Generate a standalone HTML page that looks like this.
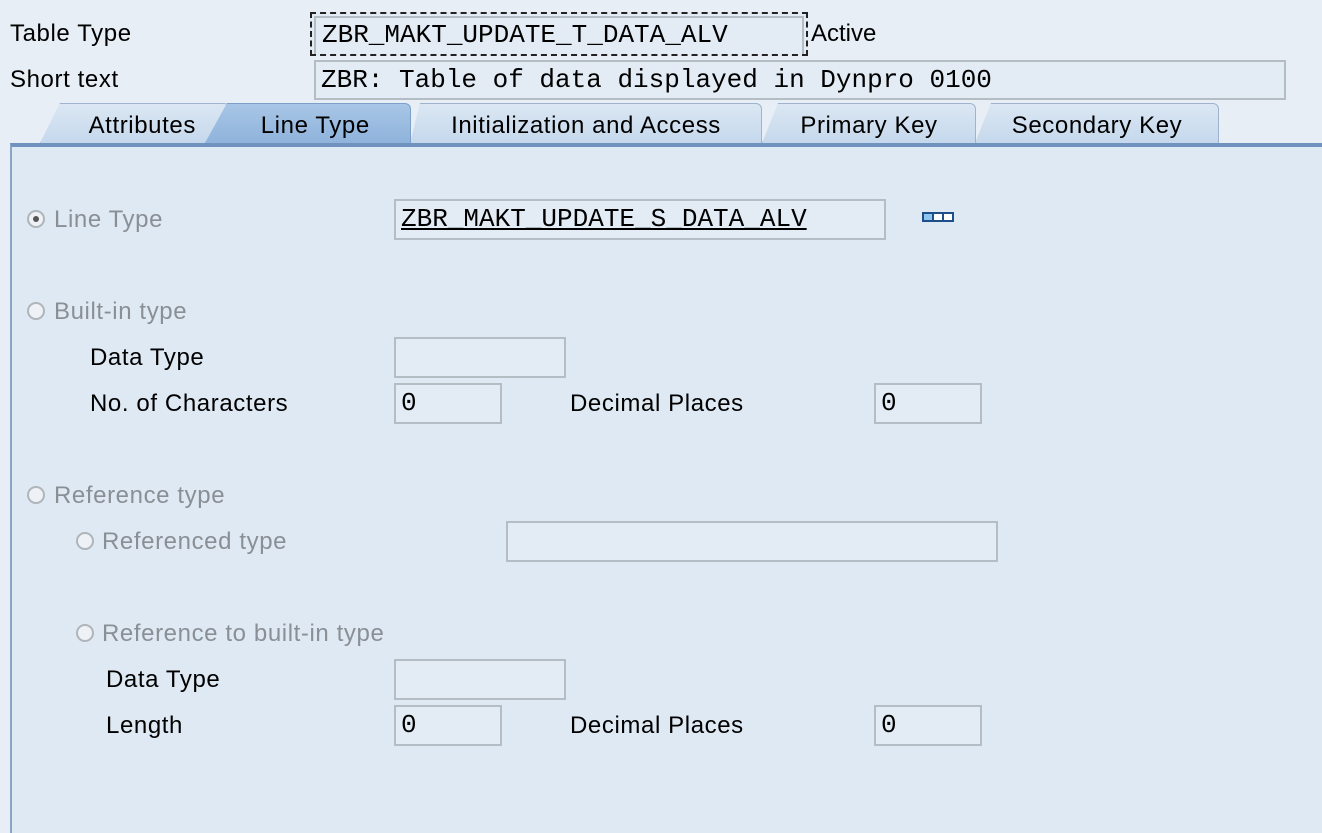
<!DOCTYPE html>
<html><head><meta charset="utf-8"><style>
body{margin:0;width:1322px;height:818px;background:#e7eef5;font-family:"Liberation Sans",sans-serif;font-size:24px;letter-spacing:0.6px;color:#000;position:relative;overflow:hidden}
.a{position:absolute;white-space:nowrap}
.lbl{position:absolute;white-space:nowrap;line-height:30px}
.g{color:#8a8f95}
.f{position:absolute;border:2px solid #b4bcc4;background:#e3ecf5;box-sizing:border-box;font-family:"Liberation Mono",monospace;font-size:26px;letter-spacing:0;line-height:36px;padding-left:5px;white-space:nowrap;overflow:hidden}
.tab{position:absolute;top:103px;height:40px;background:linear-gradient(#dbe7f3,#c5d8ec);border:1px solid #9fb4cc;border-bottom:none;border-radius:0 6px 0 0;box-sizing:border-box;text-align:center;line-height:44px}
.tab.s{background:linear-gradient(#a8c6e6,#8fb3dc);border-color:#7da0c8}
.r{position:absolute;width:18px;height:18px;border:2px solid #b0b5ba;border-radius:50%;box-sizing:border-box;background:#eef2f6}
</style></head><body>
<div class="lbl" style="left:10px;top:19px">Table Type</div>
<div class="lbl" style="left:10px;top:65px">Short text</div>
<div class="f" style="left:310px;top:12px;width:498px;height:44px;border:2px dashed #222;padding:2px"><div style="border:2px solid #b4bcc4;height:36px;line-height:34px;padding-left:6px;background:#e3ecf5">ZBR_MAKT_UPDATE_T_DATA_ALV</div></div>
<div class="lbl" style="left:811px;top:19px;letter-spacing:0">Active</div>
<div class="f" style="left:314px;top:60px;width:972px;height:40px">ZBR: Table of data displayed in Dynpro 0100</div>

<div style="position:absolute;left:10px;top:143px;width:1330px;height:690px;background:#dfe9f3;border-left:2px solid #8aa6c6;border-top:4px solid #6f93be;box-sizing:border-box"></div>
<div class="tab" style="left:40px;width:190px;clip-path:polygon(20px 0,100% 0,100% 100%,0 100%)">&nbsp;&nbsp;Attributes</div>
<div class="tab" style="left:410px;width:352px;clip-path:polygon(10px 0,100% 0,100% 100%,0 100%)">Initialization and Access</div>
<div class="tab" style="left:762px;width:214px;clip-path:polygon(16px 0,100% 0,100% 100%,0 100%)">Primary Key</div>
<div class="tab" style="left:975px;width:244px;clip-path:polygon(16px 0,100% 0,100% 100%,0 100%)">Secondary Key</div>
<div class="tab s" style="left:205px;width:206px;clip-path:polygon(22px 0,100% 0,100% 100%,0 100%)">&nbsp;&nbsp;Line Type</div>

<div class="r" style="left:27px;top:210px"><div style="width:6px;height:6px;background:#555;border-radius:50%;margin:4px"></div></div>
<div class="lbl g" style="left:54px;top:205px">Line Type</div>
<div class="f" style="left:394px;top:199px;width:492px;height:41px;text-decoration:underline">ZBR_MAKT_UPDATE_S_DATA_ALV</div>
<div class="a" style="left:922px;top:212px;width:32px;height:10px;border:2px solid #1f4f8a;box-sizing:border-box;background:linear-gradient(90deg,#8ec5ef 33%,#fff 33%);"><div style="position:absolute;left:8px;top:0;width:2px;height:6px;background:#1f4f8a"></div><div style="position:absolute;left:18px;top:0;width:2px;height:6px;background:#1f4f8a"></div></div>

<div class="r" style="left:27px;top:302px"></div>
<div class="lbl g" style="left:54px;top:297px">Built-in type</div>
<div class="lbl" style="left:90px;top:343px">Data Type</div>
<div class="f" style="left:394px;top:337px;width:172px;height:41px"></div>
<div class="lbl" style="left:90px;top:389px">No. of Characters</div>
<div class="f" style="left:394px;top:383px;width:108px;height:41px">0</div>
<div class="lbl" style="left:570px;top:389px">Decimal Places</div>
<div class="f" style="left:874px;top:383px;width:108px;height:41px">0</div>

<div class="r" style="left:27px;top:486px"></div>
<div class="lbl g" style="left:54px;top:481px">Reference type</div>
<div class="r" style="left:76px;top:532px"></div>
<div class="lbl g" style="left:102px;top:527px">Referenced type</div>
<div class="f" style="left:506px;top:521px;width:492px;height:41px"></div>
<div class="r" style="left:76px;top:624px"></div>
<div class="lbl g" style="left:102px;top:619px">Reference to built-in type</div>
<div class="lbl" style="left:106px;top:665px">Data Type</div>
<div class="f" style="left:394px;top:659px;width:172px;height:41px"></div>
<div class="lbl" style="left:106px;top:711px">Length</div>
<div class="f" style="left:394px;top:705px;width:108px;height:41px">0</div>
<div class="lbl" style="left:570px;top:711px">Decimal Places</div>
<div class="f" style="left:874px;top:705px;width:108px;height:41px">0</div>
</body></html>
